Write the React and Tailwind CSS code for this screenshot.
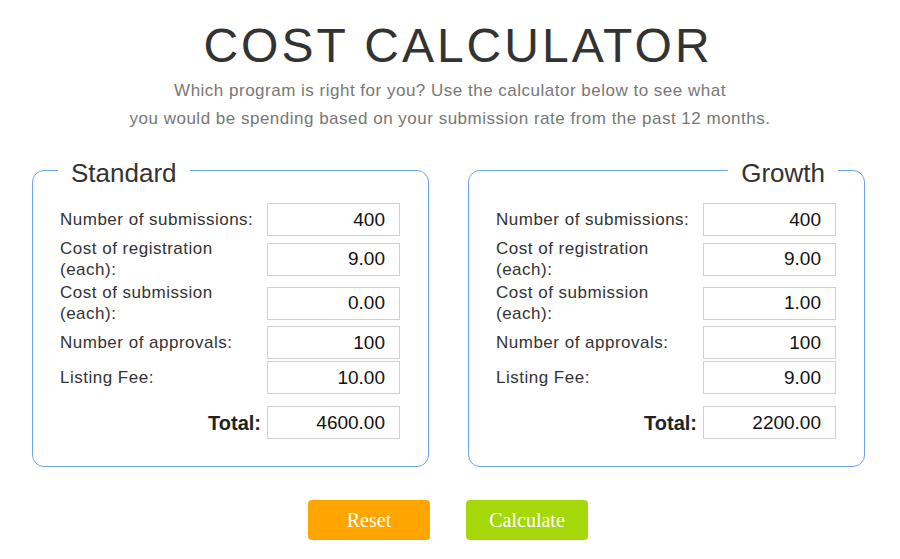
import { useState } from "react";

const plans = [
  {
    name: "Standard",
    align: "left",
    rows: [
      { label: "Number of submissions:", value: "400" },
      { label: "Cost of registration\n(each):", value: "9.00" },
      { label: "Cost of submission\n(each):", value: "0.00" },
      { label: "Number of approvals:", value: "100" },
      { label: "Listing Fee:", value: "10.00" },
    ],
    total: "4600.00",
  },
  {
    name: "Growth",
    align: "right",
    rows: [
      { label: "Number of submissions:", value: "400" },
      { label: "Cost of registration\n(each):", value: "9.00" },
      { label: "Cost of submission\n(each):", value: "1.00" },
      { label: "Number of approvals:", value: "100" },
      { label: "Listing Fee:", value: "9.00" },
    ],
    total: "2200.00",
  },
];

function PlanBox({ plan }) {
  return (
    <fieldset className="w-[397px] border border-[#6aa4e6] rounded-[12px] pl-[27px] pr-[28px] pt-[19px] pb-[27px]">
      <legend
        className={
          "px-[13px] text-[26px] leading-[28px] text-[#333] " +
          (plan.align === "right" ? "ml-auto -mr-[2px]" : "-ml-[2px]")
        }
      >
        <span className="relative top-[3px]">{plan.name}</span>
      </legend>

      <div className="flex flex-col gap-[2px]">
        {plan.rows.map((row, i) => (
          <div key={i} className="flex items-center">
            <label className="w-[207px] whitespace-pre-line text-[17px] leading-[21px] tracking-[0.5px] text-[#333]">
              {row.label}
            </label>
            <input
              readOnly
              value={row.value}
              className="w-[133px] h-[33px] border border-[#d0d0d0] text-right pr-[14px] text-[19px] text-[#111] outline-none"
            />
          </div>
        ))}
      </div>

      <div className="flex items-center justify-end mt-[12px]">
        <span className="text-[20px] font-bold text-[#222] mr-[6px]">Total:</span>
        <input
          readOnly
          value={plan.total}
          className="w-[133px] h-[33px] border border-[#d0d0d0] text-right pr-[14px] text-[19px] text-[#111] outline-none"
        />
      </div>
    </fieldset>
  );
}

export default function App() {
  const [clicked, setClicked] = useState(null);

  return (
    <div
      className="w-[900px] h-[559px] bg-white overflow-hidden"
      style={{ fontFamily: '"Liberation Sans", Arial, sans-serif' }}
    >
      <h1 className="pt-[22px] pl-4 text-center text-[48px] leading-[48px] tracking-[3px] text-[#333] font-normal">
        COST CALCULATOR
      </h1>
      <p className="mt-[7px] text-center text-[17px] leading-[28px] tracking-[0.5px] text-[#777]">
        Which program is right for you? Use the calculator below to see what
        <br />
        you would be spending based on your submission rate from the past 12 months.
      </p>

      <div className="flex gap-[39px] pl-[32px] mt-[23px]">
        {plans.map((p) => (
          <PlanBox key={p.name} plan={p} />
        ))}
      </div>

      <div className="flex justify-center gap-[36px] mt-[33px] pr-[4px]">
        <button
          onClick={() => setClicked("reset")}
          className="w-[122px] h-[40px] rounded-[4px] bg-[#ffa500] text-white text-[20px]"
          style={{ fontFamily: '"Liberation Serif", "Times New Roman", serif' }}
        >
          Reset
        </button>
        <button
          onClick={() => setClicked("calc")}
          className="w-[122px] h-[40px] rounded-[4px] bg-[#a4d80b] text-white text-[20px]"
          style={{ fontFamily: '"Liberation Serif", "Times New Roman", serif' }}
        >
          Calculate
        </button>
      </div>
    </div>
  );
}
